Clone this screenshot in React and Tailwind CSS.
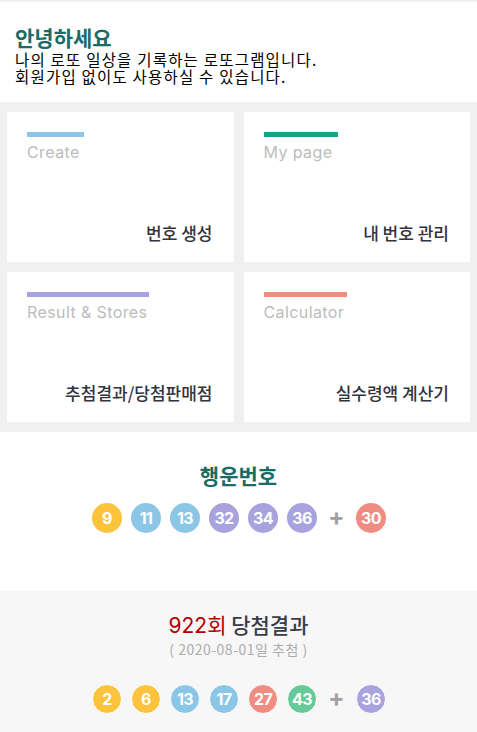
import React from 'react';

const KR = { fontFamily: '"Noto Sans CJK KR", "Noto Sans", sans-serif' };
const EN = { fontFamily: 'Inter, "Noto Sans CJK KR", sans-serif' };

const BALL = {
    yellow: 'bg-[#fcc43c]',
    blue: 'bg-[#8cc6e7]',
    purple: 'bg-[#a8a3de]',
    red: 'bg-[#f08d82]',
    green: 'bg-[#67c998]',
};

function colorOf(n) {
    if (n <= 10) return BALL.yellow;
    if (n <= 20) return BALL.blue;
    if (n <= 30) return BALL.red;
    if (n <= 40) return BALL.purple;
    return BALL.green;
}

function Ball({ n, color, bordered }) {
    return (
        <div
            className={`w-[30px] h-[30px] rounded-full flex items-center justify-center text-white text-[16px] font-bold tracking-[-0.6px] ${color} ${bordered ? 'border-[1.5px] border-white' : ''}`}
            style={EN}
        >
            {n}
        </div>
    );
}

function BallRow({ nums, bonus, bonusColor, bordered }) {
    return (
        <div className="flex items-center justify-center gap-[9px] pl-[1px]">
            {nums.map((n) => (
                <Ball key={n} n={n} color={colorOf(n)} bordered={bordered} />
            ))}
            <span className="w-[21px] text-center text-[24px] font-bold text-[#a0a0a0] leading-none -mt-[3px]" style={EN}>+</span>
            <Ball n={bonus} color={bonusColor} bordered={bordered} />
        </div>
    );
}

function MenuCard({ title, label, bar, barWidth }) {
    return (
        <div className="bg-white h-[150px] flex flex-col justify-between pt-[20px] pb-[17px] pl-[20px] pr-[21px]">
            <div>
                <div className={`h-[5px] ${bar} ${barWidth}`} />
                <div className="text-[16px] tracking-[0.4px] text-[#bcbcbc] mt-[4px] leading-[22px]" style={EN}>{title}</div>
            </div>
            <div className="text-right text-[17px] font-medium text-[#33333f] leading-[24px]" style={KR}>{label}</div>
        </div>
    );
}

export default function App() {
    const lucky = [9, 11, 13, 32, 34, 36];
    const result = [2, 6, 13, 17, 27, 43];

    return (
        <div className="w-[477px] min-h-[732px] bg-white" style={KR}>
            <div className="h-[2px] bg-[#f0f0f0]" />

            {/* greeting */}
            <div className="h-[100px] px-[15px] pt-[23px]">
                <h1 className="text-[21px] font-bold text-[#1b6b66] leading-[24px]">안녕하세요</h1>
                <p className="text-[15.5px] tracking-[1.2px] text-black leading-[17px] mt-[2px]">
                    나의 로또 일상을 기록하는 로또그램입니다.<br />
                    회원가입 없이도 사용하실 수 있습니다.
                </p>
            </div>

            {/* menu cards */}
            <div className="bg-[#f0f0f0] grid grid-cols-2 gap-[10px] px-[7px] py-[10px]">
                <MenuCard title="Create" label="번호 생성" bar="bg-[#8cc6e7]" barWidth="w-[57px]" />
                <MenuCard title="My page" label="내 번호 관리" bar="bg-[#17a487]" barWidth="w-[74px]" />
                <MenuCard title="Result & Stores" label="추첨결과/당첨판매점" bar="bg-[#a8a3de]" barWidth="w-[122px]" />
                <MenuCard title="Calculator" label="실수령액 계산기" bar="bg-[#f08d82]" barWidth="w-[83px]" />
            </div>

            {/* lucky numbers */}
            <div className="h-[159px] pt-[29px] text-center">
                <h2 className="text-[21px] font-bold text-[#1b6b66] leading-[28px]">행운번호</h2>
                <div className="mt-[14px]">
                    <BallRow nums={lucky} bonus={30} bonusColor={BALL.red} />
                </div>
            </div>

            {/* latest result */}
            <div className="bg-[#f7f7f7] pt-[19px] pb-[18px] text-center">
                <h2 className="text-[21px] leading-[28px] text-[#3b3b48] font-medium">
                    <span className="text-[#b00000] font-normal" style={EN}>922</span>
                    <span className="text-[#b00000] font-normal">회</span> 당첨결과
                </h2>
                <div className="text-[14px] tracking-[0.5px] leading-[18px] text-[#acacac]">( 2020-08-01일 추첨 )</div>
                <div className="mt-[26px]">
                    <BallRow nums={result} bonus={36} bonusColor={BALL.purple} bordered />
                </div>
            </div>
        </div>
    );
}
